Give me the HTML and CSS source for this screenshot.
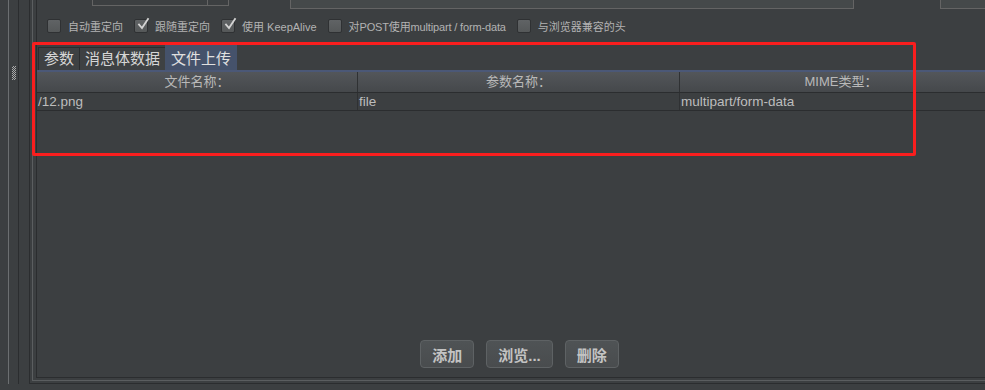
FILE: index.html
```html
<!DOCTYPE html>
<html lang="zh-CN">
<head>
  <meta charset="UTF-8" />
  <title>HTTP请求 - 文件上传</title>
  <link rel="stylesheet" href="styles.css">
</head>
<body>
  <div class="app">
    <div class="side">
      <div class="rail"><div class="grip"></div></div>
    </div>

    <div class="frame">
      <div class="etch">
        <div class="inner">
          <div class="toprow">
            <div class="field combo"><span class="combo-btn"></span></div>
            <div class="field wide"></div>
            <div class="field short"></div>
          </div>

          <div class="opts">
            <label class="opt"><span class="cb"></span>自动重定向</label>
            <label class="opt"><span class="cb on"><svg viewBox="0 0 14 14"><polyline points="3,6.5 6,10 12,1"/></svg></span>跟随重定向</label>
            <label class="opt"><span class="cb on"><svg viewBox="0 0 14 14"><polyline points="3,6.5 6,10 12,1"/></svg></span>使用 KeepAlive</label>
            <label class="opt tight"><span class="cb"></span>对POST使用multipart / form-data</label>
            <label class="opt"><span class="cb"></span>与浏览器兼容的头</label>
          </div>

          <div class="tabbar">
            <div class="tab">参数</div>
            <div class="tab">消息体数据</div>
            <div class="tab active">文件上传</div>
          </div>

          <div class="table">
            <div class="thead">
              <div class="th">文件名称：</div>
              <div class="th">参数名称：</div>
              <div class="th">MIME类型：</div>
            </div>
            <div class="tr">
              <div class="td">/12.png</div>
              <div class="td">file</div>
              <div class="td">multipart/form-data</div>
            </div>
          </div>

          <div class="actions">
            <button class="btn">添加</button>
            <button class="btn">浏览...</button>
            <button class="btn">删除</button>
          </div>
        </div>
      </div>
    </div>

    <div class="mark"></div>
  </div>
</body>
</html>
```

FILE: styles.css
```css
html, body { margin:0; overflow:hidden; }
body { background:#3c3f41; color:#bbbbbb; font-family:"Liberation Sans","Noto Sans CJK SC",sans-serif; width:985px; height:390px; }

.app { position:relative; display:flex; width:1002px; height:384px; }

/* left splitter strip */
.side { width:29px; flex:none; display:flex; }
.rail { margin-left:8px; width:9px; border-left:1px solid #6c6f71; border-right:1px solid #2b2d2f; }
.grip { margin:66px 0 0 3px; width:4px; height:14px; background:repeating-conic-gradient(#a8a8a8 0 25%, transparent 0 50%) 0 0/2px 2px; }

/* nested etched panel borders */
.frame { flex:1; min-width:0; display:flex; border-left:1px solid #2b2d2f; border-bottom:1px solid #2b2d2f; padding:0 0 2px 2px; }
.etch { flex:1; min-width:0; display:flex; border-left:1px solid #5b5e60; border-bottom:1px solid #5b5e60; padding:0 0 2px 3px; }
.inner { flex:1; min-width:0; display:flex; flex-direction:column; border-left:1px solid #2b2d2f; border-bottom:1px solid #2b2d2f; }

/* cropped inputs along the top */
.toprow { display:flex; align-items:flex-start; height:9px; overflow:hidden; }
.field { flex:none; background:#45494a; border:1px solid #646464; border-top:none; box-sizing:border-box; }
.combo { position:relative; margin-left:55px; width:137px; height:6px; background:#3c3f41; }
.combo-btn { position:absolute; left:114px; top:0; bottom:0; border-left:1px solid #646464; }
.wide { margin-left:61px; width:564px; height:9px; }
.short { margin-left:86px; width:100px; height:9px; }

/* checkbox options */
.opts { display:flex; align-items:center; height:28px; margin-top:3px; padding-left:10px; font-size:11px; color:#b3b3b3; }
.opt { display:flex; align-items:center; margin-right:11px; white-space:nowrap; }
.opt.tight { letter-spacing:-0.15px; }
.cb { position:relative; width:14px; height:14px; margin-right:7px; box-sizing:border-box; border:1px solid #2f3133; border-radius:2px; background:linear-gradient(#606365, #555859); }
.cb svg { position:absolute; left:1px; top:-2px; width:14px; height:14px; overflow:visible; }
.cb polyline { fill:none; stroke:#d4d4d4; stroke-width:1.8; stroke-linecap:square; }

/* tabs */
.tabbar { display:flex; align-items:flex-end; height:25px; margin-top:5px; padding-left:1px; border-bottom:2px solid #4b5877; }
.tab { height:22px; padding:0 5px; border:1px solid #2b2d2f; border-bottom:none; background:#3e4143; font-size:15px; line-height:22px; color:#d6d6d6; }
.tab + .tab { margin-left:-1px; }
.tab.active { height:24px; line-height:25px; padding:0 5px; background:#45526b; border-color:#45526b; color:#e0e0e0; }

/* table */
.table { font-size:13.5px; }
.thead { display:grid; grid-template-columns:321px 322px 1fr; height:20px; border-bottom:1px solid #2b2d2f; background:linear-gradient(#53565a, #45484b); }
.th { text-align:center; font-size:13px; line-height:20px; color:#b9b9b9; border-right:1px solid #2f3133; }
.tr { display:grid; grid-template-columns:321px 322px 1fr; height:17px; border-bottom:1px solid #2b2d2f; }
.td { padding-left:1px; line-height:17px; color:#bdbdbd; border-right:1px solid #2f3133; }
.th:last-child, .td:last-child { border-right:none; }

/* buttons */
.actions { margin-top:auto; margin-bottom:9px; display:flex; justify-content:center; gap:12px; }
.btn { height:28px; padding:0 11px; border:1px solid #5e6264; border-radius:4px; background:linear-gradient(#4f5355, #494c4e); color:#c3c3c3; font:bold 15px "Liberation Sans","Noto Sans CJK SC",sans-serif; }

/* red annotation box */
.mark { position:absolute; left:32px; top:42px; width:884px; height:114px; box-sizing:border-box; border:3px solid #fa1e1e; border-radius:2px; }
```
